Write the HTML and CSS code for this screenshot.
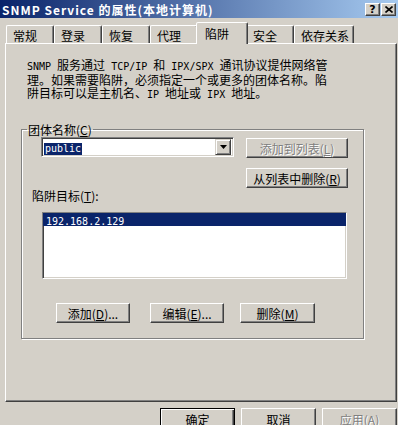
FILE: index.html
```html
<!DOCTYPE html>
<html lang="zh-CN">
<head>
    <meta charset="UTF-8">
    <title>SNMP Service 的属性</title>
    <link rel="stylesheet" href="styles.css">
</head>
<body>

<div class="titlebar">
  <span class="title">SNMP Service 的属性(本地计算机)</span>
  <span class="caption-btn help">?</span>
  <span class="caption-btn close">
    <svg width="8" height="7" viewBox="0 0 8 7"><path d="M0.5 0.5l7 6M7.5 0.5l-7 6" stroke="#000" stroke-width="1.6" fill="none"/></svg>
  </span>
</div>

<div class="tabs">
  <div class="tab">常规</div>
  <div class="tab">登录</div>
  <div class="tab">恢复</div>
  <div class="tab">代理</div>
  <div class="tab active">陷阱</div>
  <div class="tab">安全</div>
  <div class="tab wide">依存关系</div>
</div>

<div class="panel">
  <p class="desc"><span class="en">SNMP </span>服务通过<span class="en"> TCP/IP </span>和<span class="en"> IPX/SPX </span>通讯协议提供网络管<br>理。如果需要陷阱，必须指定一个或更多的团体名称。陷<br>阱目标可以是主机名、<span class="en">IP </span>地址或<span class="en"> IPX </span>地址。</p>

  <fieldset class="group">
    <legend>团体名称(<u>C</u>)</legend>

    <div class="row">
      <div class="combo">
        <span class="combo-text"><span class="sel en">public</span></span>
        <span class="drop">
          <svg width="7" height="4" viewBox="0 0 7 4"><path d="M0 0h7L3.5 4z" fill="#000"/></svg>
        </span>
      </div>
      <button class="btn list-btn add-list disabled">添加到列表(<u>L</u>)</button>
    </div>

    <button class="btn list-btn remove">从列表中删除(<u>R</u>)</button>

    <div class="label">陷阱目标(<u>T</u>):</div>

    <div class="listbox">
      <div class="item sel"><span class="en">192.168.2.129</span></div>
    </div>

    <div class="actions">
      <button class="btn act">添加(<u>D</u>)...</button>
      <button class="btn act edit">编辑(<u>E</u>)...</button>
      <button class="btn act del">删除(<u>M</u>)</button>
    </div>
  </fieldset>
</div>

<div class="footer">
  <button class="btn default">确定</button>
  <button class="btn">取消</button>
  <button class="btn disabled">应用(<u>A</u>)</button>
</div>

</body>
</html>
```

FILE: styles.css
```css
* {
    box-sizing: border-box;
}

body {
    margin: 0;
    width: 398px;
    height: 425px;
    overflow: hidden;
    background: #d4d0c8;
    color: #000;
    font-family: "Noto Sans CJK SC", sans-serif;
    font-size: 12px;
    line-height: 13px;
}

/* half-width latin text, 6px per char like the old bitmap font */
.en {
    font-family: "DejaVu Sans Mono", monospace;
    font-size: 10px;
}

/* title bar */
.titlebar {
    height: 18px;
    display: flex;
    align-items: center;
    padding: 0 2px;
    background: linear-gradient(to right, #0a246a, #a6caf0);
    color: #fff;
}
.title {
    flex: 1;
    font-weight: bold;
    letter-spacing: 1px;
    white-space: nowrap;
}
.caption-btn {
    width: 15px;
    height: 13px;
    display: flex;
    align-items: center;
    justify-content: center;
    background: #d4d0c8;
    border: 1px solid;
    border-color: #fff #404040 #404040 #fff;
    box-shadow: inset -1px -1px #808080;
    color: #000;
    font: bold 11px "DejaVu Sans", sans-serif;
}
.help {
    margin-right: 1px;
}

/* tabs */
.tabs {
    height: 25px;
    display: flex;
    align-items: flex-end;
    padding-left: 6px;
}
.tab {
    width: 48px;
    height: 18px;
    padding: 3px 0 0 6px;
    border: 1px solid;
    border-bottom: 0;
    border-color: #fff #404040 transparent #fff;
    border-radius: 2px 2px 0 0;
    box-shadow: inset -1px 0 #808080;
    white-space: nowrap;
}
.tab.wide {
    width: 60px;
}
.tab.active {
    position: relative;
    z-index: 1;
    width: 52px;
    height: 22px;
    margin: 0 -2px -1px;
    padding: 4px 0 0 8px;
    background: #d4d0c8;
}

/* tab page */
.panel {
    margin-left: 5px;
    width: 392px;
    height: 359px;
    padding: 14px 0 0 15px;
    border: 1px solid;
    border-color: #fff #404040 #404040 #fff;
    box-shadow: inset -1px -1px #808080;
}
.desc {
    margin: 0 0 22px 6px;
    white-space: nowrap;
}

.group {
    width: 343px;
    margin: 0;
    padding: 0 0 15px 0;
    min-width: 0;
    border: 1px solid #808080;
    box-shadow: inset 1px 1px #fff, 1px 1px #fff;
}
.group legend {
    margin-left: 5px;
    padding: 0 1px;
    line-height: 13px;
}

.row {
    display: flex;
    margin: 1px 0 0 19px;
}

.combo {
    width: 193px;
    height: 20px;
    display: flex;
    align-items: center;
    padding: 2px;
    background: #fff;
    border: 1px solid;
    border-color: #808080 #fff #fff #808080;
    box-shadow: inset 1px 1px #404040, inset -1px -1px #d4d0c8;
}
.combo-text {
    flex: 1;
}
.combo .sel {
    display: inline-block;
    padding: 0 1px;
    line-height: 12px;
    background: #0a246a;
    color: #fff;
}
.drop {
    width: 16px;
    height: 16px;
    display: flex;
    align-items: center;
    justify-content: center;
    background: #d4d0c8;
    border: 1px solid;
    border-color: #d4d0c8 #404040 #404040 #d4d0c8;
    box-shadow: inset 1px 1px #fff, inset -1px -1px #808080;
}

/* buttons */
.btn {
    height: 20px;
    padding: 0;
    font: inherit;
    line-height: 13px;
    white-space: nowrap;
    color: #000;
    background: #d4d0c8;
    border: 1px solid;
    border-color: #fff #404040 #404040 #fff;
    box-shadow: inset -1px -1px #808080;
}
.btn.disabled {
    color: #808080;
    text-shadow: 1px 1px #fff;
}
.btn.default {
    border-color: #000;
    box-shadow: inset 1px 1px #fff, inset -1px -1px #404040, inset -2px -2px #808080;
}
.list-btn {
    width: 102px;
}
.add-list {
    margin: 1px 0 0 12px;
}
.remove {
    display: block;
    margin: 10px 0 0 224px;
}

.label {
    margin: 1px 0 0 10px;
}

.listbox {
    width: 305px;
    height: 67px;
    margin: 10px 0 0 20px;
    background: #fff;
    border: 1px solid;
    border-color: #808080 #fff #fff #808080;
    box-shadow: inset 1px 1px #404040, inset -1px -1px #d4d0c8;
}
.item {
    height: 13px;
    padding-left: 3px;
}
.item.sel {
    background: #0a246a;
    color: #fff;
}

.actions {
    display: flex;
    margin: 24px 0 0 34px;
}
.act {
    width: 74px;
}
.edit {
    margin-left: 20px;
}
.del {
    width: 75px;
    margin-left: 16px;
}

/* dialog buttons */
.footer {
    display: flex;
    justify-content: flex-end;
    gap: 6px;
    margin-top: 6px;
    padding-right: 1px;
}
.footer .btn {
    width: 75px;
    height: 23px;
}
```
